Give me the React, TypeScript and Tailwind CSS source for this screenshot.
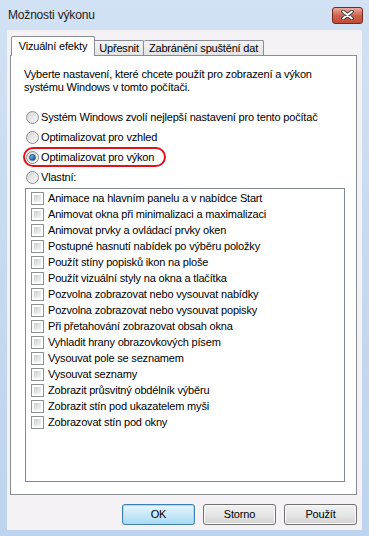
import React from "react";

const effects = [
  "Animace na hlavním panelu a v nabídce Start",
  "Animovat okna při minimalizaci a maximalizaci",
  "Animovat prvky a ovládací prvky oken",
  "Postupné hasnutí nabídek po výběru položky",
  "Použít stíny popisků ikon na ploše",
  "Použít vizuální styly na okna a tlačítka",
  "Pozvolna zobrazovat nebo vysouvat nabídky",
  "Pozvolna zobrazovat nebo vysouvat popisky",
  "Při přetahování zobrazovat obsah okna",
  "Vyhladit hrany obrazovkových písem",
  "Vysouvat pole se seznamem",
  "Vysouvat seznamy",
  "Zobrazit průsvitný obdélník výběru",
  "Zobrazit stín pod ukazatelem myši",
  "Zobrazovat stín pod okny",
];

const Radio = ({ checked }: { checked?: boolean }) => (
  <span className="flex h-[13px] w-[13px] shrink-0 items-center justify-center rounded-full border border-[#8e8f8f] bg-gradient-to-br from-[#d4d4d4] to-[#fbfbfb]">
    {checked && (
      <span className="h-[7px] w-[7px] rounded-full border border-[#1b4f80] bg-gradient-to-br from-[#7cc3f2] to-[#14508d]" />
    )}
  </span>
);

const Checkbox = () => (
  <span className="flex h-[13px] w-[13px] shrink-0 border border-[#8e8f8f] bg-white p-[2px]">
    <span className="flex-1 bg-gradient-to-br from-[#cbcdd1] to-[#f6f6f6]" />
  </span>
);

const Button = ({ label, primary }: { label: string; primary?: boolean }) => (
  <button
    className={
      primary
        ? "flex h-[21px] w-[73px] items-center justify-center rounded-[3px] border border-[#3c7fb1] bg-gradient-to-b from-[#e8f5fc] via-[#c9e9fb] to-[#a9d9f3] shadow-[inset_0_0_0_1px_#9fe0fb]"
        : "flex h-[21px] w-[73px] items-center justify-center rounded-[3px] border border-[#707070] bg-gradient-to-b from-[#f2f2f2] via-[#e6e6e6] to-[#d2d2d2] shadow-[inset_0_0_0_1px_#fafafa]"
    }
  >
    {label}
  </button>
);

export default function App() {
  return (
    <div className="flex h-[536px] w-[369px] flex-col whitespace-nowrap bg-gradient-to-b from-[#d2e2f4] via-[#c6d9f0] to-[#bed4ee] font-['Liberation_Sans',Arial,sans-serif] text-[11px] tracking-[-0.18px] text-black">
      <div className="flex h-[30px] shrink-0 items-center justify-between pl-2 pr-[6px]">
        <span className="text-[12px] text-[#1c1c1c]">Možnosti výkonu</span>
        <span className="flex h-[17px] w-[31px] items-center justify-center rounded-[3px] border border-[#6e2a22] bg-gradient-to-b from-[#e9a99c] via-[#d0614f] to-[#c04a36]">
          <svg width="13" height="10" viewBox="0 0 13 10">
            <path d="M2 1.5 L11 8.5 M11 1.5 L2 8.5" stroke="#3b3b3b" strokeWidth="3.6" strokeLinecap="round" />
            <path d="M2 1.5 L11 8.5 M11 1.5 L2 8.5" stroke="#ffffff" strokeWidth="2" strokeLinecap="round" />
          </svg>
        </span>
      </div>

      <div className="mx-[7px] mb-[6px] flex flex-1 flex-col bg-[#f4f2f5] pl-[3px] pr-[5px] pt-[6px]">
        <div className="ml-[1px] flex items-end">
          <div className="relative z-10 -mb-px flex h-[20px] w-[84px] items-center justify-center rounded-t-[2px] border border-b-0 border-[#898c95] bg-white pb-[1px]">
            Vizuální efekty
          </div>
          <div className="flex h-[15px] w-[49px] items-center justify-center rounded-tr-[2px] border border-b-0 border-l-0 border-[#898c95] bg-gradient-to-b from-[#f3f3f3] to-[#e3e3e3]">
            Upřesnit
          </div>
          <div className="flex h-[15px] w-[120px] items-center justify-center rounded-t-[2px] border border-b-0 border-l-0 border-[#898c95] bg-gradient-to-b from-[#f3f3f3] to-[#e3e3e3]">
            Zabránění spuštění dat
          </div>
        </div>

        <div className="h-[440px] border border-[#898c95] bg-white px-[13px] pt-[12px]">
          <p className="leading-[13px]">
            Vyberte nastavení, které chcete použít pro zobrazení a výkon
            <br />
            systému Windows v tomto počítači.
          </p>

          <div className="mt-[13px] flex flex-col">
            <label className="flex h-[20px] items-center gap-[2px] pl-[2px]">
              <Radio />
              <span>Systém Windows zvolí nejlepší nastavení pro tento počítač</span>
            </label>
            <label className="flex h-[20px] items-center gap-[2px] pl-[2px]">
              <Radio />
              <span>Optimalizovat pro vzhled</span>
            </label>
            <label className="relative flex h-[20px] items-center gap-[2px] pl-[2px]">
              <Radio checked />
              <span>Optimalizovat pro výkon</span>
              <span className="absolute left-[-1px] top-0 h-[20px] w-[143px] rounded-[10px] border-2 border-[#e3121a]" />
            </label>
            <label className="flex h-[20px] items-center gap-[2px] pl-[2px]">
              <Radio />
              <span>Vlastní:</span>
            </label>
          </div>

          <div className="ml-[1px] mt-[1px] h-[294px] w-[320px] border border-[#828790] bg-white pl-[5px] pt-[1px]">
            {effects.map((e) => (
              <div key={e} className="flex h-[16px] items-center gap-[4px]">
                <Checkbox />
                <span>{e}</span>
              </div>
            ))}
          </div>
        </div>

        <div className="mt-[9px] flex justify-end gap-[8px]">
          <Button label="OK" primary />
          <Button label="Storno" />
          <Button label="Použít" />
        </div>
      </div>
    </div>
  );
}
